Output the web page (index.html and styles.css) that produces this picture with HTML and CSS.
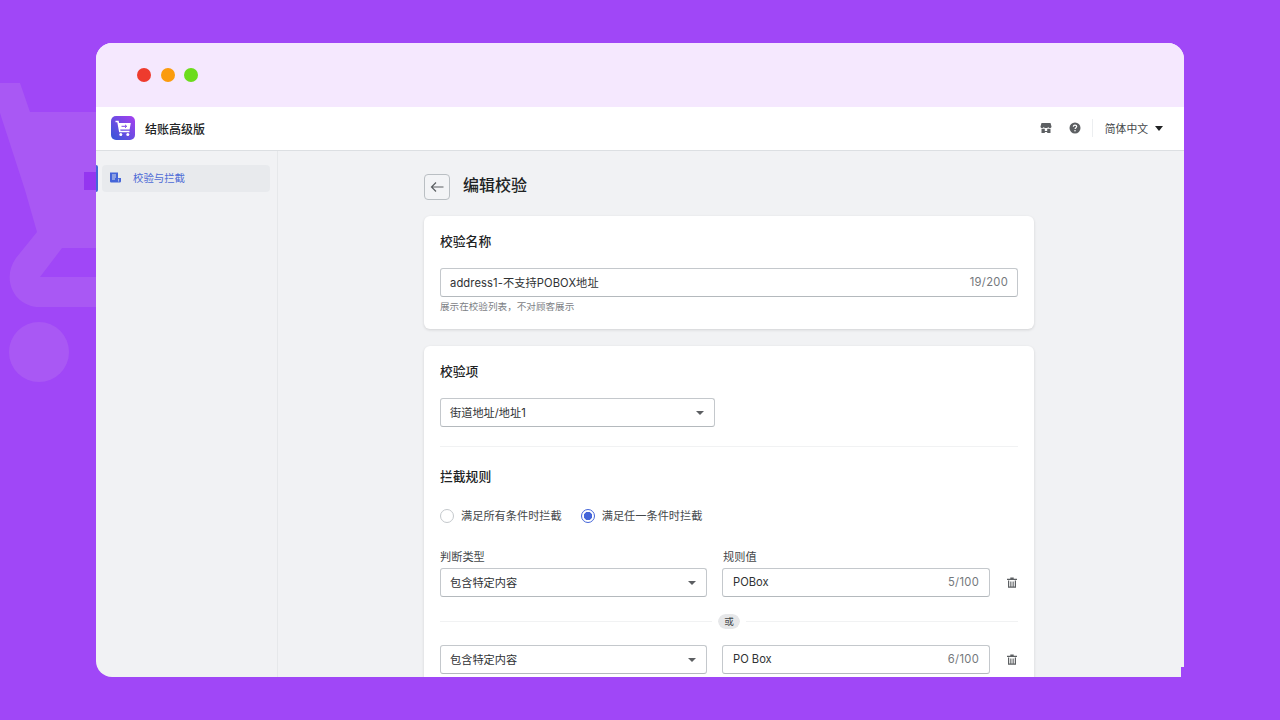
FILE: index.html
```html
<!DOCTYPE html>
<html lang="zh-CN">
  <head>
    <meta charset="UTF-8" />
    <title>结账高级版</title>
    <link rel="stylesheet" href="styles.css">
  </head>
  <body>
    <svg class="bg-cart" width="96" height="400" viewBox="0 0 96 400">
      <path d="M0 83H20L30 112H96V248H62L40 277H96V307H40C14 307 1 279 16 258L37 232L25 190L0 113Z" fill="#a958f4" />
      <circle cx="39" cy="352" r="30" fill="#a958f4" />
    </svg>
    <div class="tab-mark"></div>

    <div class="window">
      <div class="titlebar">
        <span class="dot dot-red"></span>
        <span class="dot dot-orange"></span>
        <span class="dot dot-green"></span>
      </div>

      <header class="topbar">
        <div class="logo">
          <svg width="24" height="24" viewBox="0 0 24 24">
            <defs>
              <linearGradient id="logo-bg" x1="0" y1="1" x2="1" y2="0">
                <stop offset="0" stop-color="#3158d6" />
                <stop offset="1" stop-color="#a93ff0" />
              </linearGradient>
            </defs>
            <rect width="24" height="24" rx="5" fill="url(#logo-bg)" />
            <path d="M4.5 5.5H7L8.8 15.5H18.5" fill="none" stroke="#fff" stroke-width="1.6" />
            <path d="M7.4 7H19.8L18.6 13.6H8.6Z" fill="#fff" />
            <path d="M10.5 10.3H15.6M14 8.8L15.6 10.3L14 11.8" fill="none" stroke="#7a45e4" stroke-width="1" />
            <circle cx="9.8" cy="18.6" r="1.5" fill="#fff" />
            <circle cx="16.8" cy="18.6" r="1.5" fill="#fff" />
          </svg>
        </div>
        <span class="app-name">结账高级版</span>
        <div class="top-actions">
          <svg class="top-icon" width="12" height="12" viewBox="0 0 12 12">
            <path d="M1.5 1H10.5L11.5 4.5C11.5 5.6 10.6 6 10 6C9.2 6 8.6 5.6 8.4 5C8.1 5.6 7.2 6 6 6C4.8 6 3.9 5.6 3.6 5C3.4 5.6 2.8 6 2 6C1.4 6 .5 5.6 .5 4.5Z" fill="#5c5f62" />
            <path d="M1.5 6.8H4.8V9H7.2V6.8H10.5V11H7.2V10H4.8V11H1.5Z" fill="#5c5f62" />
          </svg>
          <svg class="top-icon help-icon" width="12" height="12" viewBox="0 0 12 12">
            <circle cx="6" cy="6" r="5.5" fill="#5c5f62" />
            <path d="M4.3 4.7C4.4 3.7 5.1 3.1 6 3.1C7 3.1 7.7 3.7 7.7 4.6C7.7 5.7 6.1 5.8 6.1 7" fill="none" stroke="#fff" stroke-width="1.2" />
            <circle cx="6" cy="8.8" r=".8" fill="#fff" />
          </svg>
          <span class="top-divider"></span>
          <span class="lang">简体中文</span>
          <span class="lang-caret"></span>
        </div>
      </header>

      <div class="layout">
        <aside class="sidebar">
          <div class="nav-item">
            <svg width="11" height="11" viewBox="0 0 11 11">
              <path d="M0 .5H8V6H11V9C11 10 10.2 10.5 9.5 10.5H1.5C.6 10.5 0 10 0 9Z" fill="#4465d9" />
              <path d="M2 3H6M2 5H6M2 7H5" stroke="#e8eaed" stroke-width=".9" />
              <path d="M8.6 6.8V9.6" stroke="#e8eaed" stroke-width=".7" />
            </svg>
            <span>校验与拦截</span>
          </div>
        </aside>

        <main class="main">
          <div class="page-head">
            <button class="back-btn">
              <svg width="14" height="12" viewBox="0 0 14 12">
                <path d="M13.5 6H1.5M6 1.5L1.5 6L6 10.5" fill="none" stroke="#5c5f62" stroke-width="1.2" />
              </svg>
            </button>
            <h1>编辑校验</h1>
          </div>

          <section class="card card-name">
            <h2>校验名称</h2>
            <div class="field">
              <span class="name-value">address1-不支持POBOX地址</span>
              <span class="count">19/200</span>
            </div>
            <p class="hint">展示在校验列表，不对顾客展示</p>
          </section>

          <section class="card card-rules">
            <h2>校验项</h2>
            <div class="field field-item">
              <span>街道地址/地址1</span>
              <span class="caret"></span>
            </div>
            <div class="divider"></div>

            <h2>拦截规则</h2>
            <div class="radios">
              <label class="radio"><span class="radio-mark"></span>满足所有条件时拦截</label>
              <label class="radio"><span class="radio-mark radio-on"></span>满足任一条件时拦截</label>
            </div>

            <div class="rule-labels">
              <span>判断类型</span>
              <span>规则值</span>
            </div>
            <div class="rule-row">
              <div class="field">
                <span>包含特定内容</span>
                <span class="caret"></span>
              </div>
              <div class="field">
                <span>POBox</span>
                <span class="count">5/100</span>
              </div>
              <svg class="trash" width="10" height="11" viewBox="0 0 10 11">
                <path d="M3.3 1.8V.6H6.7V1.8H10V3H0V1.8Z" fill="#5c5f62" />
                <path d="M1 3.6H2.2V9.6H3.3V4.5H4.4V9.6H5.6V4.5H6.7V9.6H7.8V3.6H9V10.8H1Z" fill="#5c5f62" />
              </svg>
            </div>

            <div class="or-line">
              <span class="or-tag">或</span>
            </div>

            <div class="rule-row">
              <div class="field">
                <span>包含特定内容</span>
                <span class="caret"></span>
              </div>
              <div class="field">
                <span>PO Box</span>
                <span class="count">6/100</span>
              </div>
              <svg class="trash" width="10" height="11" viewBox="0 0 10 11">
                <path d="M3.3 1.8V.6H6.7V1.8H10V3H0V1.8Z" fill="#5c5f62" />
                <path d="M1 3.6H2.2V9.6H3.3V4.5H4.4V9.6H5.6V4.5H6.7V9.6H7.8V3.6H9V10.8H1Z" fill="#5c5f62" />
              </svg>
            </div>
          </section>
        </main>
      </div>
      <div class="corner-notch"></div>
    </div>
  </body>
</html>
```

FILE: styles.css
```css
* {
  margin: 0;
  padding: 0;
  box-sizing: border-box;
}

body {
  width: 1280px;
  height: 720px;
  overflow: hidden;
  padding: 43px 96px;
  background-color: #a047f7;
  font-family: Inter, "Noto Sans CJK SC", sans-serif;
  color: #202223;
}

.bg-cart {
  position: absolute;
  left: 0;
  top: 0;
}

.tab-mark {
  position: absolute;
  left: 84px;
  top: 172px;
  width: 12px;
  height: 18px;
  background-color: #9436f0;
}

.window {
  position: relative;
  height: 634px;
  display: flex;
  flex-direction: column;
  overflow: hidden;
  border-radius: 16px 16px 0 16px;
  background-color: #f1f2f4;
}

.corner-notch {
  position: absolute;
  right: 0;
  bottom: 0;
  width: 3px;
  height: 10px;
  background-color: #a047f7;
}

.titlebar {
  height: 64px;
  flex-shrink: 0;
  display: flex;
  align-items: center;
  gap: 9.5px;
  padding-left: 41px;
  background-color: #f5e8fe;
}

.dot {
  width: 14px;
  height: 14px;
  border-radius: 50%;
}

.dot-red {
  background-color: #ee3b2d;
}

.dot-orange {
  background-color: #fb9b0d;
}

.dot-green {
  background-color: #6cdc1c;
}

.topbar {
  height: 44px;
  flex-shrink: 0;
  display: flex;
  align-items: center;
  padding: 0 21px 1px 15px;
  background-color: #fff;
  border-bottom: 1px solid #dcdfe2;
}

.logo {
  width: 24px;
  height: 24px;
  margin-right: 10px;
}

.app-name {
  font-size: 12px;
  font-weight: 500;
}

.top-actions {
  margin-left: auto;
  display: flex;
  align-items: center;
}

.top-icon {
  display: block;
}

.help-icon {
  margin-left: 17px;
}

.top-divider {
  width: 1px;
  height: 18px;
  margin: 0 12px 0 11px;
  background-color: #eceef0;
}

.lang {
  font-size: 10.8px;
  color: #44474a;
}

.lang-caret {
  margin-left: 7px;
  border-left: 4.5px solid transparent;
  border-right: 4.5px solid transparent;
  border-top: 5px solid #202223;
}

.layout {
  flex: 1;
  min-height: 0;
  display: flex;
}

.sidebar {
  width: 182px;
  flex-shrink: 0;
  padding: 14px 7px 0 6px;
  border-right: 1px solid #e6e8ea;
  position: relative;
}

.sidebar::before {
  content: "";
  position: absolute;
  left: 0;
  top: 14px;
  width: 2px;
  height: 27px;
  border-radius: 0 2px 2px 0;
  background-color: #4465d9;
}

.nav-item {
  height: 27px;
  display: flex;
  align-items: center;
  gap: 12px;
  padding-left: 8px;
  padding-bottom: 2px;
  border-radius: 4px;
  background-color: #e8eaed;
  font-size: 10.4px;
  color: #4d6ad6;
}

.main {
  flex: 1;
  min-width: 0;
  padding: 23px 0 0 146px;
  overflow: hidden;
}

.page-head {
  display: flex;
  align-items: center;
  gap: 13px;
  height: 26px;
  margin-bottom: 16px;
}

.back-btn {
  width: 26px;
  height: 26px;
  display: flex;
  align-items: center;
  justify-content: center;
  border: 1px solid #babfc3;
  border-radius: 4px;
  background-color: #f3f4f6;
}

h1 {
  font-size: 16px;
  line-height: 20px;
  font-weight: 500;
  margin-bottom: 5px;
}

.card {
  width: 610px;
  padding: 16px;
  border-radius: 6px;
  background-color: #fff;
  box-shadow: 0 1px 3px rgba(23, 24, 24, 0.14);
}

.card-name {
  height: 113px;
  margin-bottom: 17px;
}

.card-rules {
  height: 340px;
}

h2 {
  font-size: 12.8px;
  line-height: 20px;
  font-weight: 500;
}

.field {
  height: 29px;
  display: flex;
  align-items: center;
  justify-content: space-between;
  padding: 0 10px 2px 9px;
  border: 1px solid #c4c8cc;
  border-bottom-color: #b4b9bd;
  border-radius: 3px;
  background-color: #fff;
  font-size: 11.2px;
  color: #303234;
}

.card-name .field {
  margin-top: 16px;
  padding-right: 9px;
}

.name-value {
  letter-spacing: 0.1px;
}

.count {
  color: #74787c;
  letter-spacing: 0.3px;
}

.hint {
  margin-top: 3px;
  font-size: 9.6px;
  line-height: 14px;
  color: #7d8185;
}

.field-item {
  width: 275px;
  margin-top: 16px;
}

.caret {
  margin-top: 2px;
  border-left: 4px solid transparent;
  border-right: 4px solid transparent;
  border-top: 4px solid #5c5f62;
}

.divider {
  height: 1px;
  margin: 19px 0 20px;
  background-color: #f1f2f3;
}

.radios {
  display: flex;
  gap: 19px;
  margin-top: 21px;
}

.radio {
  display: flex;
  align-items: center;
  gap: 7px;
  font-size: 11.2px;
  line-height: 16px;
  color: #44474a;
}

.radio-mark {
  width: 14px;
  height: 14px;
  border: 1.5px solid #c4c8cc;
  border-radius: 50%;
}

.radio-on {
  border-color: #4465d9;
  background: radial-gradient(circle, #4465d9 0 3.8px, #fff 4.5px);
}

.rule-labels {
  display: grid;
  grid-template-columns: 267px 268px;
  column-gap: 16px;
  margin-top: 25px;
  font-size: 11.2px;
  line-height: 16px;
  color: #44474a;
}

.rule-labels span {
  display: block;
}

.rule-row {
  display: grid;
  grid-template-columns: 267px 268px 10px;
  column-gap: 15px;
  align-items: center;
  margin-top: 3px;
}

.rule-row .field + .field {
  padding-left: 10px;
}

.trash {
  margin-left: 2px;
  display: block;
}

.or-line {
  height: 48px;
  display: flex;
  align-items: center;
  padding-left: 278px;
  background: linear-gradient(#f1f2f3, #f1f2f3) 0 23.5px / 100% 1px no-repeat;
}

.or-tag {
  width: 22px;
  height: 15px;
  display: flex;
  align-items: center;
  justify-content: center;
  border-radius: 8px;
  outline: 6px solid #fff;
  background-color: #e6e7e9;
  font-size: 9.6px;
  color: #44474a;
}

.or-line + .rule-row {
  margin-top: 0;
}
```
